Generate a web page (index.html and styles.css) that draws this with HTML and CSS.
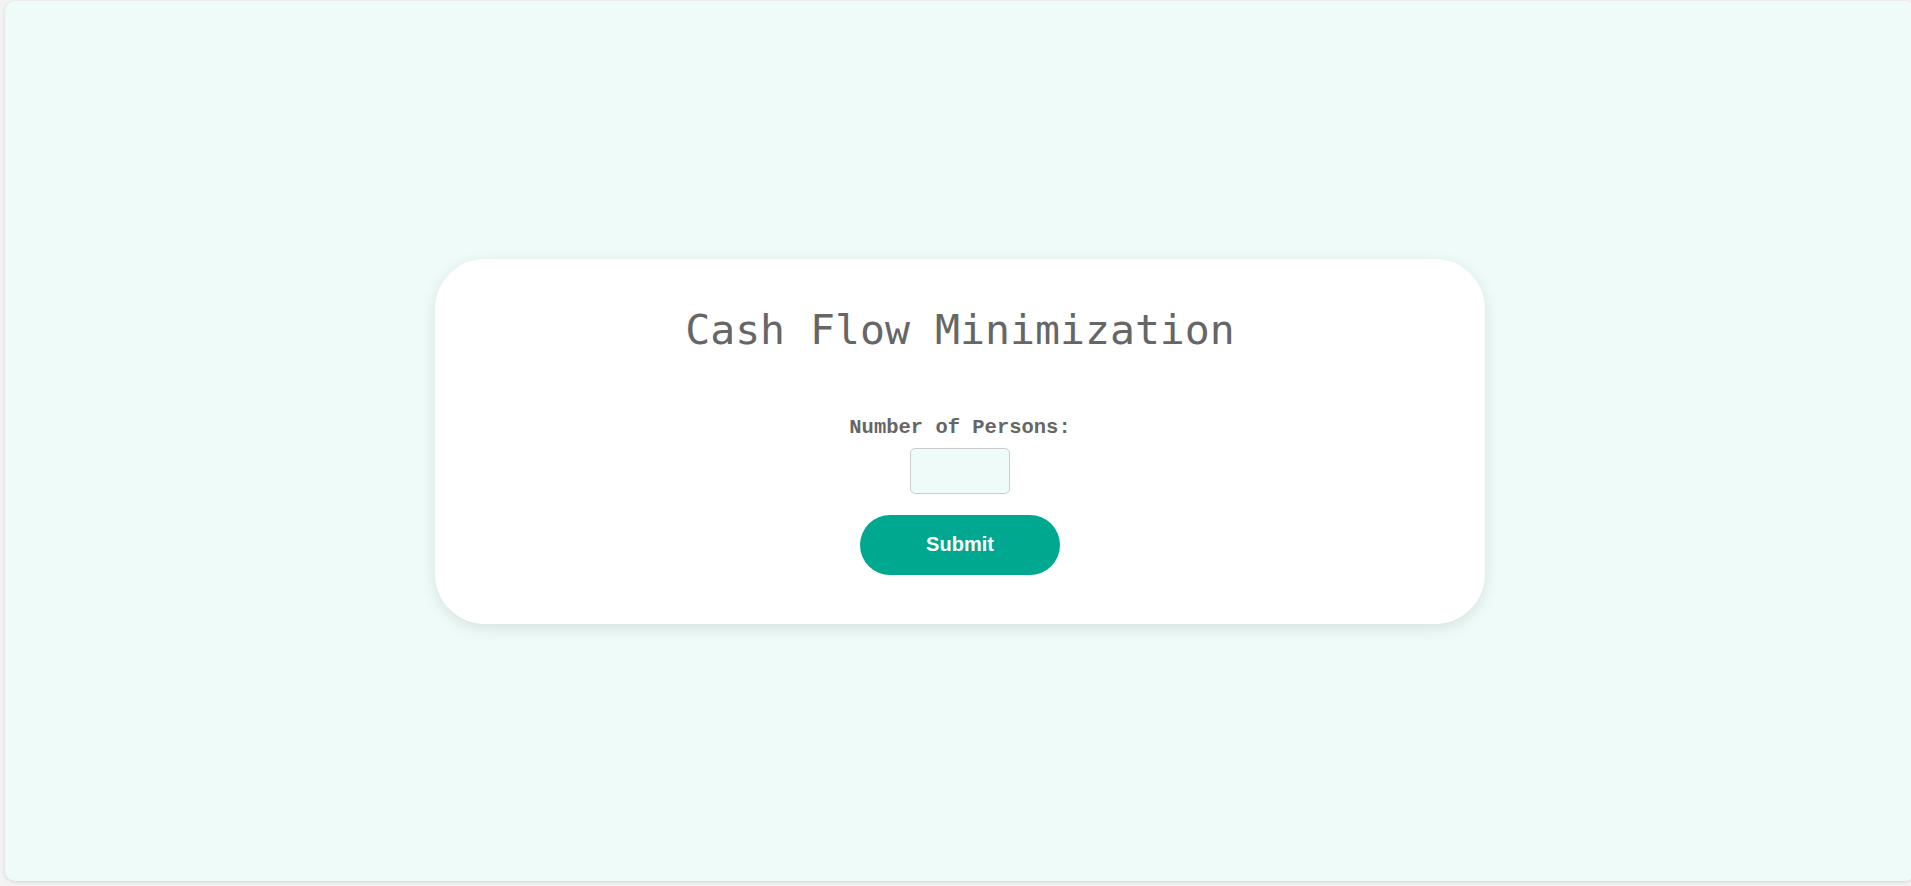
FILE: index.html
```html
<!DOCTYPE html>
<html lang="en">
<head>
<meta charset="utf-8">
<title>Cash Flow Minimization</title>
<link rel="stylesheet" href="styles.css">
</head>
<body>
<div class="page">
  <div class="card">
    <h1 class="title">Cash Flow Minimization</h1>
    <form class="form">
      <label class="label" for="persons">Number of Persons:</label>
      <input class="input" id="persons" type="text">
      <button class="btn" type="button">Submit</button>
    </form>
  </div>
</div>
</body>
</html>
```

FILE: styles.css
```css
html, body {
  margin: 0;
  padding: 0;
  overflow: hidden;
}
body {
  background: #f3f3f3;
  width: 1911px;
  height: 886px;
}
.page {
  box-sizing: border-box;
  margin: 1px 0 0 5px;
  width: 1910px;
  height: 880px;
  background: #eefbf8;
  border-radius: 10px;
  box-shadow: 0 1px 4px rgba(0, 0, 0, 0.12);
  display: flex;
  align-items: center;
  justify-content: center;
}
.card {
  box-sizing: border-box;
  width: 1050px;
  height: 365px;
  background: #ffffff;
  border-radius: 50px;
  box-shadow: 0 4px 15px rgba(0, 0, 0, 0.1);
  display: flex;
  flex-direction: column;
  align-items: center;
  padding-top: 47px;
}
.title {
  margin: 0;
  font-family: "DejaVu Sans Mono", monospace;
  font-weight: normal;
  font-size: 41.5px;
  line-height: 48px;
  color: #666666;
}
.form {
  display: flex;
  flex-direction: column;
  align-items: center;
  margin-top: 62px;
}
.label {
  font-family: "Liberation Mono", monospace;
  font-weight: bold;
  font-size: 20.5px;
  line-height: 24px;
  color: #666666;
}
.input {
  box-sizing: border-box;
  margin-top: 8px;
  width: 100px;
  height: 46px;
  border: 1px solid #cccccc;
  border-radius: 5px;
  background: #effbf8;
  outline: none;
}
.btn {
  margin-top: 21px;
  width: 200px;
  height: 60px;
  border: none;
  border-radius: 30px;
  background: #00a88f;
  color: #ffffff;
  font-family: "Liberation Sans", Arial, sans-serif;
  font-weight: bold;
  font-size: 20px;
}
```
